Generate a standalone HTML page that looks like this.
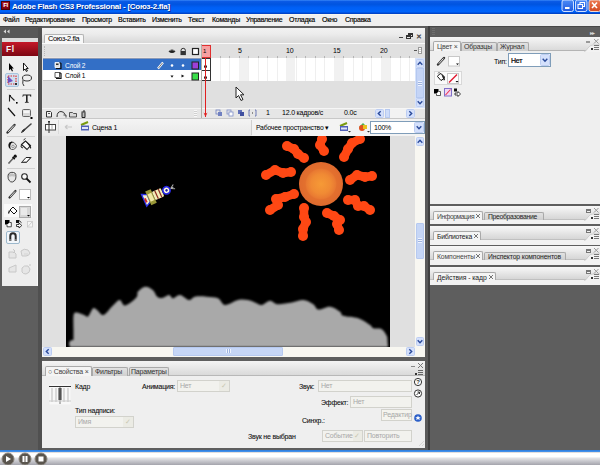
<!DOCTYPE html>
<html><head><meta charset="utf-8">
<style>
*{margin:0;padding:0;box-sizing:border-box}
html,body{width:600px;height:465px;overflow:hidden;background:#5e5e5e;font-family:"Liberation Sans",sans-serif;font-size:7px;color:#000;letter-spacing:-0.2px}
.a{position:absolute}
.t{position:absolute;white-space:nowrap;line-height:8px}
#title{left:0;top:0;width:600px;height:14px;background:linear-gradient(#3a88f8 0,#0a5ae6 10%,#0054e0 30%,#0060f6 55%,#0064fa 85%,#0048d2 93%,#0040c0 100%)}
#menu{left:0;top:14px;width:600px;height:12px;background:#efefef;border-top:1px solid #f8f6ee}
#menu span{position:absolute;top:1px;white-space:nowrap;line-height:8px;letter-spacing:-0.25px;-webkit-text-stroke:0.15px #000}
.panel{background:#ececec}
.tab{position:absolute;background:#f4f4f4;border:1px solid #a9a9a9;border-bottom:none;border-radius:2px 2px 0 0}
.tabg{position:absolute;background:linear-gradient(#e2e2e2,#cfcfcf);border:1px solid #a9a9a9;border-bottom:none;border-radius:2px 2px 0 0}
.hdr{position:absolute;background:linear-gradient(#f2f2f2,#d6d6d6)}
.gray{color:#a8a8a8}
.dd{position:absolute;background:#f2f2ee;border:1px solid #d2d2cc}
</style></head><body>
<!-- TITLE -->
<div id="title" class="a">
  <div class="a" style="left:1px;top:1px;width:9px;height:9px;background:linear-gradient(#b01828,#7a0010);border:1px solid #4a0008;color:#fff;font-size:6px;font-weight:bold;line-height:7px;text-align:center;letter-spacing:-0.3px">Fl</div>
  <div class="t" style="left:12px;top:3px;color:#fff;font-weight:bold;font-size:8px;letter-spacing:-0.25px;text-shadow:1px 1px 0 #0a3090">Adobe Flash CS3 Professional - [Союз-2.fla]</div>
  <svg class="a" style="left:561px;top:0" width="39" height="13" viewBox="561 0 39 13">
  <defs><linearGradient id="bb" x1="0" y1="0" x2="0" y2="1"><stop offset="0" stop-color="#4c8cf8"/><stop offset="1" stop-color="#2058dc"/></linearGradient>
  <linearGradient id="bc" x1="0" y1="0" x2="0" y2="1"><stop offset="0" stop-color="#ee7a52"/><stop offset="1" stop-color="#d24a22"/></linearGradient></defs>
  <rect x="562" y="0" width="11.5" height="11.5" rx="2" fill="url(#bb)" stroke="#d0e0ff" stroke-width="1"/>
  <rect x="565" y="7" width="4.5" height="2" fill="#fff"/>
  <rect x="575.5" y="0" width="11.5" height="11.5" rx="2" fill="url(#bb)" stroke="#d0e0ff" stroke-width="1"/>
  <rect x="580" y="2.5" width="4.5" height="4" fill="none" stroke="#fff" stroke-width="1"/><rect x="578" y="4.5" width="4.5" height="4" fill="#3a70e8" stroke="#fff" stroke-width="1"/>
  <rect x="589" y="0" width="11.5" height="11.5" rx="2" fill="url(#bc)" stroke="#f0d8d0" stroke-width="1"/>
  <path d="M592 2.5 L597 8 M597 2.5 L592 8" stroke="#fff" stroke-width="1.6"/>
</svg></div>
<!-- MENU -->
<div id="menu" class="a">
  <span style="left:3px">Файл</span>
  <span style="left:25px">Редактирование</span>
  <span style="left:82px">Просмотр</span>
  <span style="left:118px">Вставить</span>
  <span style="left:152px">Изменить</span>
  <span style="left:188px">Текст</span>
  <span style="left:212px">Команды</span>
  <span style="left:246px">Управление</span>
  <span style="left:289px">Отладка</span>
  <span style="left:322px">Окно</span>
  <span style="left:345px">Справка</span>
</div>

<!-- TOOLBAR -->
<div class="a" style="left:0;top:26px;width:38px;height:12px;background:#585858;border-top:1px solid #444"></div>
<svg class="a" style="left:3px;top:29px" width="7" height="5" viewBox="0 0 7 5"><path d="M3 0.5 L0.5 2.5 L3 4.5z M6.5 0.5 L4 2.5 L6.5 4.5z" fill="#d8d8d8"/></svg>
<div class="a panel" style="left:2px;top:38px;width:36px;height:248px;background:#eeeeee;border-right:1px solid #fafafa"></div>
<div class="a" style="left:38px;top:26px;width:4px;height:424px;background:#505050"></div>
<div class="a" style="left:2px;top:38px;width:36px;height:4px;background:#dcdcdc"></div>
<div class="a" style="left:2px;top:42px;width:36px;height:14px;background:linear-gradient(#c41828,#7c0612)"></div>
<div class="t" style="left:6px;top:45px;color:#f4f4f4;font-weight:bold;font-size:8.5px;letter-spacing:0.6px">Fl</div>

<!-- TOOL ICONS -->
<div class="a" style="left:5px;top:73px;width:14px;height:14px;background:#cfe0f0;border:1px solid #a8c4dc;border-radius:2px"></div>
<div class="a" style="left:7px;top:89px;width:28px;height:1px;background:#d0d0d0"></div>
<div class="a" style="left:7px;top:136px;width:28px;height:1px;background:#d0d0d0"></div>
<div class="a" style="left:7px;top:168px;width:28px;height:1px;background:#d0d0d0"></div>
<div class="a" style="left:4px;top:204px;width:28px;height:13px;background:#fafafa"></div>
<div class="a" style="left:6px;top:231px;width:14px;height:13px;background:#f2f6fa;border:1px solid #9cb8cc;border-radius:2px"></div>
<svg class="a" style="left:2px;top:58px" width="35" height="225" viewBox="2 58 35 225">
 <!-- arrows -->
 <path d="M9 63 L9 70.5 L10.6 69 L12 71.5 L13 71 L11.8 68.5 L13.8 68.5 Z" fill="#000"/>
 <path d="M23.5 63 L23.5 70.5 L25 69 L26.4 71.5 L27.4 71 L26.2 68.5 L28.2 68.5 Z" fill="#fff" stroke="#000" stroke-width=".9"/>
 <!-- free transform -->
 <rect x="8" y="76" width="8" height="8" fill="none" stroke="#e03030" stroke-width="1.2" stroke-dasharray="1.5 1"/>
 <path d="M8 76 L13 81 L8 83 Z" fill="#7050c0"/><rect x="15" y="83" width="2" height="2" fill="#333"/>
 <!-- lasso -->
 <ellipse cx="27" cy="78" rx="4.5" ry="3" fill="none" stroke="#333" stroke-width="1"/><path d="M23 80 q-1 4 1 6" stroke="#333" fill="none" stroke-width="1"/>
 <!-- pen -->
 <path d="M9.5 101.5 V95.5 L14.5 100.5" fill="none" stroke="#222" stroke-width="1.1"/><path d="M9.5 95.5 h1.5" stroke="#222" stroke-width="1"/><rect x="16" y="102" width="1.6" height="1.6" fill="#000"/>
 <!-- T -->
 <path d="M22.8 94.5 h8.4 v2.2 h-.7 l-.5 -1.2 h-2.4 v6.2 l1.1 .4 v.6 h-3.8 v-.6 l1.1 -.4 v-6.2 h-2.4 l-.5 1.2 h-.7z" fill="#222"/>
 <!-- line -->
 <path d="M8 108 L15 116" stroke="#111" stroke-width="1.2"/>
 <!-- rect -->
 <rect x="22.5" y="109.5" width="8" height="7" rx="1" fill="#d8d8d8" stroke="#666" stroke-width="1"/><rect x="23.5" y="110.5" width="6" height="2.5" fill="#f6f6f6"/><rect x="30.5" y="117" width="2" height="2" fill="#000"/>
 <!-- pencil -->
 <path d="M7.5 132.5 L14.5 125" stroke="#333" stroke-width="2.4" stroke-linecap="round"/><path d="M8.2 131.8 L14 125.5" stroke="#f0f0f0" stroke-width="1"/>
 <!-- brush -->
 <path d="M23 131 L31 124" stroke="#444" stroke-width="1.6" stroke-linecap="round"/><path d="M21.5 132.5 q1 -3 3.5 -3.5 q-.5 2.5 -3.5 3.5z" fill="#333" stroke="#333" stroke-width="1"/>
 <!-- ink bottle -->
 <path d="M9 143.5 q2 -2.5 5 -1 l2.5 3 q0 3 -3 4 h-2 q-2.5 -1 -2.5 -3z" fill="#e4e4e4" stroke="#555" stroke-width=".9"/>
 <path d="M9.5 142.5 q-1.5 2 -.5 5 l1.5 1.5 q-1 -3 .5 -5.5 l2 -1.5 q-2 -.5 -3.5 .5z" fill="#111"/>
 <circle cx="13" cy="146.5" r="1.3" fill="none" stroke="#888" stroke-width=".8"/>
 <!-- paint bucket -->
 <path d="M21.5 144.5 l4 -3.5 l5 4.5 l-3.5 4 z" fill="#fafafa" stroke="#222" stroke-width="1.1"/>
 <path d="M21.5 144.5 l-.5 2.5 l2 1" fill="none" stroke="#222" stroke-width="1"/>
 <path d="M25.5 141 l5 4.5 l.8 2.5 l-1 .8 l-1 -2.5z" fill="#222"/>
 <path d="M23.5 140 l2 -1.5" stroke="#333" stroke-width="1"/>
 <!-- eyedropper -->
 <path d="M8.5 163.5 L13 158.5" stroke="#333" stroke-width="1.2"/><path d="M8.5 163.5 L12.5 159" stroke="#ccc" stroke-width=".4"/>
 <path d="M12 157.5 l2.2 2.2 l1.2 -1.2 l-2.2 -2.2z" fill="#111"/><circle cx="15.2" cy="156.2" r="1.6" fill="#111"/>
 <!-- eraser -->
 <path d="M21.5 162.5 l4.5 -5 h5 l-4.5 5z" fill="#fff" stroke="#222" stroke-width="1"/><path d="M22 162 h4.5 l4.3 -4.5" fill="none" stroke="#666" stroke-width="1"/>
 <!-- hand -->
 <path d="M8 176 q0 -2.5 2 -3.2 q2 -.8 3.5 -.3 q2 .3 2.3 2 q.4 2.5 -.2 4.5 q-.8 2.3 -3.2 3 q-2 .2 -3 -1.2 q-1.6 -1.8 -1.4 -4.8z" fill="#e8e8e8" stroke="#333" stroke-width=".9"/>
 <path d="M10 174 v2.5 M12 173.5 v2.8 M14 174 v2.5" stroke="#666" stroke-width=".6"/>
 <!-- zoom -->
 <circle cx="24.5" cy="176.5" r="2.8" fill="#fafafa" stroke="#222" stroke-width="1.1"/><path d="M26.5 178.5 L30.5 182.5" stroke="#111" stroke-width="1.8"/>
 <!-- stroke pencil -->
 <path d="M9.5 197.5 L15.5 191" stroke="#333" stroke-width="2.2" stroke-linecap="round"/><path d="M10.2 196.8 L15 191.5" stroke="#f4f4f4" stroke-width=".9"/>
 <rect x="19.5" y="189.5" width="11" height="10" fill="#fff" stroke="#bbb" stroke-width="1"/><path d="M27 197 h3 l-1.5 1.5z" fill="#000"/>
 <!-- fill bucket -->
 <path d="M10 210 l3 -3 l4 4 l-3 3 z" fill="#fff" stroke="#111" stroke-width="1"/><path d="M9.5 210.5 l-1 3" stroke="#111" stroke-width="1.2"/>
 <rect x="19.5" y="206.5" width="11" height="11" fill="#d6d6d6" stroke="#aaa" stroke-width="1"/><rect x="21" y="208" width="6" height="7" fill="#eaeaea"/><path d="M27 215 h3 l-1.5 1.5z" fill="#000"/>
 <!-- small icons -->
 <rect x="5" y="220" width="4.5" height="4.5" fill="#000"/><path d="M9.5 222.5 h1.8 v4.3 h-4.3 v-2" fill="#fff" stroke="#222" stroke-width=".8"/>
 <rect x="16" y="220" width="3" height="3" fill="#111"/><path d="M16.5 224.5 h2.5 v-1.5 l2.8 2.5 l-2.8 2.5 v-1.5 h-2.5z" fill="#fff" stroke="#111" stroke-width=".8"/><path d="M19 220.5 l2.5 2.2" stroke="#111" stroke-width=".9"/>
 <rect x="27.5" y="221.5" width="5" height="5.5" fill="#f6f6f6" stroke="#c8c8c8" stroke-width=".8"/><path d="M28 226.5 l4 -4.5" stroke="#c0c0c0" stroke-width=".8"/>
 <!-- magnet -->
 <path d="M10.3 241 v-5 a2.7 2.7 0 0 1 5.4 0 v5" fill="none" stroke="#2a2a2a" stroke-width="2"/><path d="M9.3 240 h2 M14.7 240 h2" stroke="#bbb" stroke-width="1.2"/>
 <!-- disabled icons -->
 <g stroke="#c8c8c8" fill="#e6e6e6" stroke-width="1">
  <path d="M9 252 h5 l2 2 v4 h-7z"/><path d="M13 249 l2 2 l-2 2"/>
  <path d="M21 251 q3 -3 7 -1 l2 3 q-1 3 -4 3 h-4z"/><path d="M24 254 h4" stroke="#d4d4d4"/>
  <path d="M9 268 l7 -3 v7 h-7z"/>
  <path d="M22 268 q2 -3 6 -2 l2 3 q0 4 -4 5 q-3 0 -4 -2z"/><path d="M30 264 v2" />
 </g>
</svg>
<!-- DOC WINDOW -->
<div id="doc" class="a" style="left:42px;top:28px;width:383px;height:329px;background:#e4e4e4"></div>
<!-- tab strip -->
<div class="a" style="left:42px;top:28px;width:383px;height:15px;background:linear-gradient(#f2f2f2 0,#ececec 40%,#d8d8d8 100%)"></div>
<div class="tab" style="left:44px;top:34px;width:40px;height:9px;background:#f8f8f8;border-color:#b4b4b4"></div>
<div class="t" style="left:48px;top:35px;font-size:7.4px;letter-spacing:-0.35px">Союз-2.fla</div>
<div class="a" style="left:399px;top:37px;width:4px;height:1px;background:#444"></div>
<div class="a" style="left:408px;top:33px;width:5px;height:4px;border:1px solid #333;border-top-width:2px"></div>
<div class="a" style="left:406px;top:35px;width:5px;height:4px;border:1px solid #333;border-top-width:2px;background:#e6e6e6"></div>
<div class="t" style="left:416px;top:33px;font-size:7px;font-weight:bold;color:#444">✕</div>
<div class="a" style="left:42px;top:43px;width:383px;height:1px;background:#fafafa"></div>
<!-- timeline header -->
<div class="a" style="left:42px;top:44px;width:383px;height:14px;background:#e0e0e0"></div>
<div class="a" style="left:44px;top:46px;width:1px;height:10px;border-left:1px dotted #b8b8b8"></div>
<svg class="a" style="left:168px;top:47px" width="34" height="9" viewBox="0 0 34 9">
  <path d="M0.5 4.5 Q4 0.5 7.5 4.5 Q4 7.5 0.5 4.5z" fill="#222"/><path d="M1.5 3.8 Q4 1.5 6.5 3.8" stroke="#999" stroke-width=".8" fill="none"/>
  <path d="M13 4.5 v-1 a2.2 2.2 0 0 1 4.4 0 v1 z" fill="none" stroke="#333" stroke-width="1"/><rect x="12.5" y="4.3" width="5.4" height="3.8" fill="#333"/>
  <rect x="24.5" y="1.5" width="6" height="6" fill="#fff" stroke="#222" stroke-width="1.2"/>
</svg>
<!-- layer rows -->
<div class="a" style="left:43px;top:57px;width:158px;height:1px;background:#ebe6e2"></div><div class="a" style="left:43px;top:58px;width:158px;height:1px;background:#8a9ab8"></div><div class="a" style="left:43px;top:59px;width:158px;height:11px;background:#336fc6"></div>
<div class="a" style="left:43px;top:70px;width:158px;height:10px;background:#ffffff"></div>
<div class="a" style="left:43px;top:80px;width:158px;height:1px;background:#c4c4c4"></div>
<svg class="a" style="left:54px;top:61px" width="8" height="8" viewBox="0 0 8 8"><path d="M1 1.5h4.5v5H1z" fill="#ddd" stroke="#fff" stroke-width=".8"/><path d="M5.5 1.5l1.5 1v5h-5" fill="none" stroke="#111" stroke-width="1.2"/><rect x="2" y="2.5" width="2.5" height="1.5" fill="#333"/></svg>
<div class="t" style="left:65px;top:62px;color:#fff;font-size:6.6px">Слой 2</div>
<svg class="a" style="left:54px;top:71px" width="8" height="8" viewBox="0 0 8 8"><path d="M1 1.5h4.5v5H1z" fill="#fff" stroke="#333" stroke-width=".8"/><path d="M5.5 1.5l1.5 1v5h-5" fill="none" stroke="#111" stroke-width="1.2"/></svg>
<div class="t" style="left:65px;top:72px;font-size:6.6px">Слой 1</div>
<svg class="a" style="left:156px;top:60px" width="46" height="22" viewBox="0 0 46 22">
  <path d="M2 8.5 L7 2.5" stroke="#fff" stroke-width="2.2"/><path d="M2.5 8 L6.5 3" stroke="#555" stroke-width=".8"/>
  <circle cx="16" cy="5.5" r="1.3" fill="#fff"/><circle cx="27" cy="5.5" r="1.3" fill="#fff"/>
  <rect x="36" y="2" width="6.5" height="7" fill="#9b3fd8" stroke="#222" stroke-width="1"/>
  <path d="M14.5 15.5 L17.5 15.5 L16 17.8z" fill="#111"/><path d="M25.5 14.5 L28.3 16 L25.5 17.5z" fill="#111"/>
  <rect x="36" y="13" width="6.5" height="7" fill="#3adf4a" stroke="#222" stroke-width="1"/>
</svg>
<!-- frames -->
<div class="a" style="left:202px;top:58px;width:213px;height:23px;background:#fff;
 background-image:repeating-linear-gradient(90deg,transparent 0,transparent 8.47px,#efefef 8.47px,#efefef 9.47px)"></div>
<div class="a" style="left:239px;top:58px;width:9px;height:23px;background:#f1f1f1"></div>
<div class="a" style="left:286px;top:58px;width:9px;height:23px;background:#f1f1f1"></div>
<div class="a" style="left:334px;top:58px;width:9px;height:23px;background:#f1f1f1"></div>
<div class="a" style="left:381px;top:58px;width:9px;height:23px;background:#f1f1f1"></div>
<div class="a" style="left:202px;top:56px;width:213px;height:2px;
 background-image:repeating-linear-gradient(90deg,transparent 0,transparent 8.47px,#b4b4b4 8.47px,#b4b4b4 9.47px)"></div>
<div class="a" style="left:201px;top:58px;width:10px;height:23px;border:1px solid #333;background:transparent"></div>
<div class="a" style="left:201px;top:70px;width:10px;height:1px;background:#333"></div>
<div class="a" style="left:204px;top:65px;width:3px;height:3px;border-radius:50%;background:#111"></div>
<div class="a" style="left:204px;top:76px;width:3px;height:3px;border-radius:50%;background:#111"></div>
<div class="t" style="left:238px;top:47px;">5</div>
<div class="t" style="left:286px;top:47px;">10</div>
<div class="t" style="left:333px;top:47px;">15</div>
<div class="t" style="left:380px;top:47px;">20</div>
<div class="a" style="left:414px;top:50px;width:3px;height:1px;background:#555"></div><div class="a" style="left:418px;top:47px;width:4px;height:7px;border:1px solid #999;background:repeating-linear-gradient(#fff 0 1px,#ccc 1px 2px)"></div>
<div class="a" style="left:201px;top:45px;width:10px;height:13px;background:#f7a0a0;border:1px solid #e03030"></div>
<div class="t" style="left:203px;top:47px;font-size:6px">1</div>
<!-- empty grey -->
<div class="a" style="left:202px;top:81px;width:213px;height:27px;background:#e0e0e0"></div>
<div class="a" style="left:43px;top:81px;width:158px;height:27px;background:#e0e0e0"></div>
<!-- v scroll timeline -->
<div class="a" style="left:415px;top:58px;width:10px;height:50px;background:#d6e2fa"></div><div class="a" style="left:416px;top:68px;width:8px;height:30px;background:#c4d4f6;border:1px solid #b4c8f0"></div><div class="a" style="left:418px;top:81px;width:4px;height:5px;background:repeating-linear-gradient(#eef3fe 0 1px,#9fb4e0 1px 2px)"></div>
<svg class="a" style="left:416px;top:59px" width="8" height="9" viewBox="0 0 8 9"><rect x=".5" y=".5" width="7" height="8" rx="1" fill="#d4e0fb" stroke="#bccdf2"/><path d="M1.7000000000000002 5.7 L4.0 3.3 L6.3 5.7" fill="none" stroke="#2a4a9a" stroke-width="1.4"/></svg>
<svg class="a" style="left:416px;top:98px" width="8" height="9" viewBox="0 0 8 9"><rect x=".5" y=".5" width="7" height="8" rx="1" fill="#d4e0fb" stroke="#bccdf2"/><path d="M1.7000000000000002 3.3 L4.0 5.7 L6.3 3.3" fill="none" stroke="#2a4a9a" stroke-width="1.4"/></svg>


<!-- bottom bar -->
<div class="a" style="left:42px;top:108px;width:383px;height:10px;background:#e6e6e6;border-top:1px solid #f6f6f6"></div>
<svg class="a" style="left:45px;top:110px" width="45" height="8" viewBox="0 0 45 8">
 <path d="M1.5 1.5 h4 l1 1 v4.5 h-5z" fill="#f4f4f4" stroke="#333" stroke-width="1"/><path d="M3 3.5 h2" stroke="#333" stroke-width=".8"/>
 <path d="M12 7 q0 -5.5 4 -5.5 q3 0 4 3" fill="none" stroke="#333" stroke-width="1"/><path d="M18.5 5 h2.5 v2.5" fill="none" stroke="#333" stroke-width=".9"/>
 <path d="M24.5 2.5 h3 l1 1 h3 v3.5 h-7z" fill="#d8d8d8" stroke="#444" stroke-width=".9"/>
 <path d="M36.5 2 h4 M37 2.5 v5 h3 v-5" fill="#bbb" stroke="#222" stroke-width="1"/><path d="M38 1 h2" stroke="#222" stroke-width="1"/>
</svg>
<div class="a" style="left:194px;top:110px;width:3px;height:7px;background:repeating-linear-gradient(#f8f8f8 0 1px,#d0d0d0 1px 2px)"></div>
<div class="a" style="left:201px;top:44px;width:1px;height:74px;background:#b0b0a8"></div><div class="a" style="left:205px;top:58px;width:1px;height:59px;background:#e02020"></div><svg class="a" style="left:202px;top:111px" width="7" height="7" viewBox="0 0 7 7"><path d="M1.5 1.5 L3.5 6 L5.5 1.5 L3.5 3z" fill="#e02020"/></svg>
<svg class="a" style="left:215px;top:109px" width="45" height="9" viewBox="0 0 45 9">
 <rect x="1" y="1" width="4" height="4" fill="none" stroke="#7080c0" stroke-width=".8"/><rect x="3" y="3" width="4" height="4" fill="#7080c0"/>
 <rect x="12" y="1" width="4" height="4" fill="none" stroke="#8090c8" stroke-width=".8"/><rect x="14" y="3" width="4" height="4" fill="#fff" stroke="#8090c8" stroke-width=".8"/>
 <rect x="23" y="1" width="4" height="4" fill="#6070b8"/><rect x="25" y="3" width="4" height="4" fill="#4050a0"/>
 <path d="M35 1h-1v6h1 M40 1h1v6h-1" fill="none" stroke="#5060a8" stroke-width=".8"/><rect x="37" y="3.5" width="1" height="1" fill="#333"/>
</svg>
<div class="t" style="left:266px;top:109px;">1</div>
<div class="t" style="left:282px;top:109px;">12.0 кадров/с</div>
<div class="t" style="left:344px;top:109px;">0.0c</div>
<div class="a" style="left:375px;top:109px;width:40px;height:9px;background:#f2f2f2"></div>
<svg class="a" style="left:375px;top:109px" width="9" height="9" viewBox="0 0 9 9"><rect x=".5" y=".5" width="8" height="8" rx="1" fill="#d4e0fb" stroke="#bccdf2"/><path d="M5.7 2.2 L3.3 4.5 L5.7 6.8" fill="none" stroke="#2a4a9a" stroke-width="1.4"/></svg>
<div class="a" style="left:385px;top:109px;width:5px;height:9px;background:#cddcfa;border:1px solid #b6c9f0"></div>
<svg class="a" style="left:406px;top:109px" width="9" height="9" viewBox="0 0 9 9"><rect x=".5" y=".5" width="8" height="8" rx="1" fill="#d4e0fb" stroke="#bccdf2"/><path d="M3.3 2.2 L5.7 4.5 L3.3 6.8" fill="none" stroke="#2a4a9a" stroke-width="1.4"/></svg>


<!-- edit bar -->
<div class="a" style="left:42px;top:118px;width:383px;height:18px;background:linear-gradient(#f4f4f4,#e8e8e8);border-top:1px solid #c8c8c8"></div>
<svg class="a" style="left:44px;top:120px" width="14" height="14" viewBox="0 0 14 14">
 <rect x="1.5" y="4.5" width="10" height="5.5" fill="#fff" stroke="#444" stroke-width="1"/><path d="M5 1 v12" stroke="#333" stroke-width="1"/><rect x="4" y="1" width="2" height="1.5" fill="#333"/>
 <path d="M8 5 v4.5" stroke="#999" stroke-width=".8"/>
</svg><div class="a" style="left:58px;top:120px;width:1px;height:14px;background:#dadada"></div>

<svg class="a" style="left:64px;top:124px" width="9" height="6" viewBox="0 0 9 6"><path d="M1 3 h7 M1 3 l2.5 -2 M1 3 l2.5 2" stroke="#c8c8c8" stroke-width="1.1" fill="none"/></svg>
<svg class="a" style="left:80px;top:121px" width="10" height="10" viewBox="0 0 10 10">
 <path d="M1 4 L8 1" stroke="#7a9a10" stroke-width="2"/><rect x="1" y="4.5" width="8" height="5" fill="#5060b8"/><rect x="2" y="6" width="6" height="2" fill="#e0e4f8"/>
</svg>
<div class="t" style="left:92px;top:124px;">Сцена 1</div>
<div class="a" style="left:251px;top:120px;width:1px;height:15px;background:#d0d0d0"></div><div class="a" style="left:252px;top:119px;width:173px;height:17px;background:#f3f3f3"></div>
<div class="t" style="left:256px;top:124px;font-size:6.8px">Рабочее пространство ▾</div>
<svg class="a" style="left:338px;top:121px" width="34" height="12" viewBox="0 0 34 12">
 <path d="M2 5 L9 2" stroke="#7a9a10" stroke-width="2"/><rect x="2" y="5" width="8" height="5" fill="#5060b8"/><rect x="3" y="6.5" width="6" height="2" fill="#e0e4f8"/><path d="M10 10h3l-1.5 1.5z" fill="#333"/>
 <path d="M21 6 l4 -4 l3 3z" fill="#50b050"/><circle cx="24" cy="7" r="3" fill="#e05020"/><rect x="25" y="4" width="4" height="4" fill="#e8c020"/><path d="M29 10h3l-1.5 1.5z" fill="#333"/>
</svg>
<div class="a" style="left:370px;top:121px;width:55px;height:13px;background:#fff;border:1px solid #7f9db9"></div>
<div class="t" style="left:374px;top:124px;">100%</div>
<svg class="a" style="left:414px;top:122px" width="10" height="11" viewBox="0 0 10 11"><rect x=".5" y=".5" width="9" height="10" rx="1" fill="#d4e0fb" stroke="#bccdf2"/><path d="M2.7 4.3 L5.0 6.7 L7.3 4.3" fill="none" stroke="#2a4a9a" stroke-width="1.4"/></svg>

<!-- stage area -->
<div class="a" style="left:43px;top:136px;width:372px;height:211px;background:#e0e0e0"></div>
<div class="a" style="left:66px;top:136px;width:324px;height:211px;background:#000"></div>
<!-- v scroll stage -->
<div class="a" style="left:415px;top:136px;width:10px;height:211px;background:#f8f7f1"></div>
<svg class="a" style="left:416px;top:137px" width="8" height="9" viewBox="0 0 8 9"><rect x=".5" y=".5" width="7" height="8" rx="1" fill="#d4e0fb" stroke="#bccdf2"/><path d="M1.7000000000000002 5.7 L4.0 3.3 L6.3 5.7" fill="none" stroke="#2a4a9a" stroke-width="1.4"/></svg>
<div class="a" style="left:416px;top:223px;width:8px;height:36px;background:#c6d6f6;border:1px solid #b6c9f0;border-radius:1px"></div><div class="a" style="left:418px;top:238px;width:4px;height:5px;background:repeating-linear-gradient(#eef3fe 0 1px,#9fb4e0 1px 2px)"></div>
<svg class="a" style="left:416px;top:337px" width="8" height="9" viewBox="0 0 8 9"><rect x=".5" y=".5" width="7" height="8" rx="1" fill="#d4e0fb" stroke="#bccdf2"/><path d="M1.7000000000000002 3.3 L4.0 5.7 L6.3 3.3" fill="none" stroke="#2a4a9a" stroke-width="1.4"/></svg>
<!-- h scroll stage -->
<div class="a" style="left:42px;top:347px;width:383px;height:10px;background:#f8f7f1"></div>
<svg class="a" style="left:43px;top:347px" width="9" height="9" viewBox="0 0 9 9"><rect x=".5" y=".5" width="8" height="8" rx="1" fill="#d4e0fb" stroke="#bccdf2"/><path d="M5.7 2.2 L3.3 4.5 L5.7 6.8" fill="none" stroke="#2a4a9a" stroke-width="1.4"/></svg>
<div class="a" style="left:173px;top:347px;width:110px;height:9px;background:#c6d6f6;border:1px solid #b6c9f0;border-radius:1px"></div><div class="a" style="left:226px;top:349px;width:5px;height:4px;background:repeating-linear-gradient(90deg,#eef3fe 0 1px,#9fb4e0 1px 2px)"></div>
<svg class="a" style="left:406px;top:347px" width="9" height="9" viewBox="0 0 9 9"><rect x=".5" y=".5" width="8" height="8" rx="1" fill="#d4e0fb" stroke="#bccdf2"/><path d="M3.3 2.2 L5.7 4.5 L3.3 6.8" fill="none" stroke="#2a4a9a" stroke-width="1.4"/></svg>
<!-- STAGE ART -->
<svg class="a" style="left:66px;top:136px" width="324" height="211" viewBox="66 136 324 211">
 <defs>
  <radialGradient id="sg" cx="0.5" cy="0.5" r="0.5">
   <stop offset="0" stop-color="#f69a36"/><stop offset="0.45" stop-color="#f08a34"/><stop offset="0.66" stop-color="#e97a32"/><stop offset="0.72" stop-color="#e3702e"/><stop offset="1" stop-color="#df6a2e"/>
  </radialGradient>
  <filter id="bl" x="-5%" y="-5%" width="110%" height="110%"><feGaussianBlur stdDeviation="0.9"/></filter>
 </defs>
 <g fill="none" stroke="#ff4814" stroke-width="8.6" stroke-linecap="round" stroke-linejoin="round">
  <path d="M287 146 L294 149 L298 154 L304 158"/>
  <path d="M266 175 L275 170 L283 173 L291 172"/>
  <path d="M322 139 L320 145 L324 151"/>
  <path d="M360 139 L352 143 L348 149 L344 157"/>
  <path d="M350 180 L357 175 L365 177 L372 176"/>
  <path d="M348 200 L355 200 L358 206 L364 206 L370 210"/>
  <path d="M327 213 L334 216 L340 220 L337 224 L339 230"/>
  <path d="M304 208 L304 217 L306 222 L303 229 L303 236"/>
  <path d="M294 194 L285 197 L276 199 L278 205 L270 210"/>
 </g>
 <g fill="#ff4814">
<circle cx="287" cy="146" r="5"/><circle cx="294" cy="149" r="5"/><circle cx="298" cy="154" r="5"/><circle cx="304" cy="158" r="5"/>
<circle cx="266" cy="175" r="5"/><circle cx="275" cy="170" r="5"/><circle cx="283" cy="173" r="5"/><circle cx="291" cy="172" r="5"/>
<circle cx="322" cy="139" r="5"/><circle cx="320" cy="145" r="5"/><circle cx="324" cy="151" r="5"/>
<circle cx="360" cy="139" r="5"/><circle cx="352" cy="143" r="5"/><circle cx="348" cy="149" r="5"/><circle cx="344" cy="157" r="5"/>
<circle cx="350" cy="180" r="5"/><circle cx="357" cy="175" r="5"/><circle cx="365" cy="177" r="5"/><circle cx="372" cy="176" r="5"/>
<circle cx="348" cy="200" r="5"/><circle cx="355" cy="200" r="5"/><circle cx="358" cy="206" r="5"/><circle cx="364" cy="206" r="5"/><circle cx="370" cy="210" r="5"/>
<circle cx="327" cy="213" r="5"/><circle cx="334" cy="216" r="5"/><circle cx="340" cy="220" r="5"/><circle cx="337" cy="224" r="5"/><circle cx="339" cy="230" r="5"/>
<circle cx="304" cy="208" r="5"/><circle cx="304" cy="217" r="5"/><circle cx="306" cy="222" r="5"/><circle cx="303" cy="229" r="5"/><circle cx="303" cy="236" r="5"/>
<circle cx="294" cy="194" r="5"/><circle cx="285" cy="197" r="5"/><circle cx="276" cy="199" r="5"/><circle cx="278" cy="205" r="5"/><circle cx="270" cy="210" r="5"/>
 </g>
 <circle cx="321" cy="184" r="22" fill="url(#sg)"/>
 <path fill="#a9a9a9" filter="url(#bl)" d="M73.5 340 C73.5 338.3 73.5 334.0 73.5 330 C73.5 326.0 73.1 318.9 73.5 316 C73.9 313.1 74.2 312.7 76 312.5 C77.8 312.3 82.0 314.3 84 315 C86.0 315.7 86.5 317.6 88 316.5 C89.5 315.4 91.5 309.6 93 308.5 C94.5 307.4 95.2 308.9 97 310 C98.8 311.1 101.0 315.6 103.5 315 C106.0 314.4 109.3 309.0 112 306.5 C114.7 304.0 117.4 300.2 119.5 300 C121.6 299.8 122.4 305.2 124.5 305.5 C126.6 305.8 129.9 303.0 132 301.5 C134.1 300.0 136.0 298.2 137 296.5 C138.0 294.8 136.6 293.1 138 291.5 C139.4 289.9 142.8 286.9 145.3 286.7 C147.8 286.4 150.9 288.4 152.8 290 C154.8 291.6 155.5 295.2 157 296.5 C158.5 297.8 160.0 298.2 162 298 C164.0 297.8 167.2 294.9 169 295 C170.8 295.1 171.2 298.3 173 298.3 C174.8 298.3 177.3 294.7 180 295 C182.7 295.3 186.5 299.7 189 300 C191.5 300.3 192.1 297.2 195 296.7 C197.9 296.1 202.9 296.4 206.7 296.7 C210.5 297.0 214.9 296.9 218 298.3 C221.1 299.7 221.7 304.7 225 305 C228.3 305.3 234.2 300.8 238 300 C241.8 299.2 245.2 299.6 248 300 C250.8 300.4 252.7 301.7 255 302.5 C257.3 303.3 259.2 305.3 261.7 305 C264.2 304.7 267.4 300.9 270 300.8 C272.6 300.7 273.9 303.9 277.5 304.2 C281.1 304.5 287.4 303.2 291.7 302.5 C296.0 301.8 299.7 299.7 303.3 300 C306.9 300.3 310.8 302.6 313.3 304.2 C315.8 305.8 315.5 309.1 318.3 309.5 C321.1 309.9 326.4 306.3 330 306.7 C333.6 307.1 337.8 310.2 340 311.7 C342.2 313.2 340.2 314.7 343.3 315.8 C346.4 316.9 353.9 316.8 358.3 318.3 C362.8 319.8 367.5 323.3 370 325 C372.5 326.7 371.4 327.6 373.3 328.3 C375.2 329.0 379.5 327.9 381.7 329.2 C383.9 330.4 385.7 333.8 386.7 335.8 C387.7 337.8 387.4 340.1 387.5 341 L388 347 L70 347 L69 344 Q69 340 73.5 340 Z"/>
 <g transform="translate(156 195) rotate(-24)">
  <path d="M-13 -6.5 L-8 -4 L-8 4 L-13 6.5 Z" fill="#f6f2d0" stroke="#2a30e8" stroke-width="1.3"/>
  <rect x="-12.5" y="-1.5" width="2" height="4.5" fill="#d02828"/>
  <rect x="-8.5" y="-7.5" width="6" height="15" fill="#9a9838"/>
  <rect x="-7.5" y="-4" width="4" height="8" fill="#f0e8a8"/>
  <rect x="-2.5" y="-4.5" width="9.5" height="9" rx="1" fill="#f4ecb8"/>
  <rect x="0" y="-4.5" width="1.2" height="9" fill="#8a2a20"/><rect x="3.8" y="-4.5" width="1.2" height="9" fill="#8a2a20"/>
  <circle cx="11.5" cy="0" r="3.6" fill="#fffbe0" stroke="#2828e8" stroke-width="1.7"/>
  <circle cx="11.5" cy="0" r="1.3" fill="#2020a0"/>
  <path d="M16 0 L20 -2.5 M16 0 L20 2 M16 0 h3" stroke="#b0b0b0" stroke-width="1"/>
 </g>
</svg>
<!-- cursor -->
<svg class="a" style="left:235px;top:86px" width="11" height="16" viewBox="0 0 11 16">
 <path d="M1 1 L1 12 L3.5 9.5 L6 14.5 L8 13.5 L5.5 8.8 L9 8.8 Z" fill="#fff" stroke="#222" stroke-width="1"/>
</svg>
<!-- PROPERTIES -->
<div id="props" class="a" style="left:42px;top:361px;width:384px;height:87px;background:#efefef"></div>
<div class="a" style="left:42px;top:361px;width:384px;height:15px;background:linear-gradient(#f4f4f4,#d8d8d8)"></div>
<div class="a" style="left:42px;top:375px;width:384px;height:1px;background:#b8b8b8"></div>
<div class="tabg" style="left:92px;top:367px;width:36px;height:9px"></div>
<div class="tabg" style="left:129px;top:367px;width:40px;height:9px"></div>
<div class="tab" style="left:45px;top:366px;width:47px;height:10px;background:#f4f4f4"></div>
<div class="t" style="left:48px;top:368px;color:#444">○ Свойства ×</div>
<div class="t" style="left:95px;top:368px;color:#333">Фильтры</div>
<div class="t" style="left:131px;top:368px;color:#333">Параметры</div>
<div class="a" style="left:411px;top:366px;width:4px;height:1px;background:#888"></div>
<svg class="a" style="left:417px;top:362px" width="7" height="7" viewBox="0 0 7 7"><path d="M1 1 L6 6 M6 1 L1 6" stroke="#777" stroke-width="1"/></svg>
<div class="a" style="left:415px;top:373px;width:2px;height:2px;background:#333"></div><div class="a" style="left:418px;top:370px;width:5px;height:5px;background:repeating-linear-gradient(#666 0 1px,transparent 1px 2px)"></div>
<svg class="a" style="left:49px;top:384px" width="22" height="21" viewBox="0 0 22 21">
 <rect x="0.5" y="0.5" width="21" height="20" fill="#f8f8f8"/>
 <path d="M0 2.5h22" stroke="#333" stroke-width="1"/>
 <path d="M3 4v14 M7 4v14 M15 4v14 M19 4v14" stroke="#bbb" stroke-width="1"/>
 <rect x="9.5" y="4" width="3" height="12" fill="#333"/><path d="M11 3v17" stroke="#777" stroke-width="1"/>
 <path d="M0 17h22" stroke="#ccc" stroke-width="1"/>
</svg>
<div class="t" style="left:75px;top:383px;">Кадр</div>
<div class="t" style="left:75px;top:407px;color:#111;font-size:7px;letter-spacing:-0.2px;-webkit-text-stroke:0.1px #111">Тип надписи:</div>
<div class="dd" style="left:75px;top:416px;width:59px;height:12px"></div>
<div class="t gray" style="left:78px;top:418px;">Имя</div>
<div class="a" style="left:123px;top:417px;width:10px;height:10px;background:#ebebe4"></div>
<div class="t" style="left:125px;top:418px;color:#c8c8b0;font-size:7px">✓</div>
<div class="t" style="left:142px;top:383px;color:#111;font-size:7px;letter-spacing:-0.2px;-webkit-text-stroke:0.1px #111">Анимация:</div>
<div class="dd" style="left:177px;top:380px;width:53px;height:12px"></div>
<div class="t gray" style="left:180px;top:382px;">Нет</div>
<div class="a" style="left:219px;top:381px;width:10px;height:10px;background:#ebebe4"></div>
<div class="t" style="left:221px;top:382px;color:#c8c8b0;font-size:7px">✓</div>
<div class="t" style="left:299px;top:383px;color:#111;font-size:7px;letter-spacing:-0.2px;-webkit-text-stroke:0.1px #111">Звук:</div>
<div class="dd" style="left:318px;top:380px;width:94px;height:12px"></div>
<div class="t gray" style="left:321px;top:382px;">Нет</div>
<div class="t" style="left:321px;top:399px;color:#111;font-size:7px;letter-spacing:-0.2px;-webkit-text-stroke:0.1px #111">Эффект:</div>
<div class="dd" style="left:350px;top:396px;width:62px;height:12px"></div>
<div class="t gray" style="left:353px;top:398px;">Нет</div>
<div class="dd" style="left:381px;top:409px;width:31px;height:12px;background:#f4f4ee"></div>
<div class="t gray" style="left:383px;top:411px;">Редактир</div>
<div class="t" style="left:302px;top:417px;color:#111;font-size:7px;letter-spacing:-0.2px;-webkit-text-stroke:0.1px #111">Синхр.:</div>
<div class="t" style="left:248px;top:433px;color:#111;font-size:7px;letter-spacing:-0.2px;-webkit-text-stroke:0.1px #111">Звук не выбран</div>
<div class="dd" style="left:322px;top:430px;width:41px;height:12px"></div>
<div class="t gray" style="left:325px;top:432px;">Событие</div>
<div class="a" style="left:353px;top:431px;width:9px;height:10px;background:#ebebe4"></div>
<div class="t" style="left:354px;top:432px;color:#c8c8b0;font-size:7px">✓</div>
<div class="dd" style="left:364px;top:430px;width:48px;height:12px"></div>
<div class="t gray" style="left:367px;top:432px;">Повторить</div>
<svg class="a" style="left:413px;top:377px" width="11" height="70" viewBox="0 0 11 70">
 <circle cx="5" cy="5" r="3.6" fill="#fff" stroke="#333" stroke-width="1"/><text x="3.3" y="7.3" font-size="6" font-family="Liberation Sans" font-weight="bold" fill="#333">?</text>
 <circle cx="5" cy="16.5" r="3.6" fill="#fff" stroke="#333" stroke-width="1"/><path d="M3.5 18 l3 -3 M4.5 15 h2 v2" stroke="#333" stroke-width="1" fill="none"/>
 <circle cx="5" cy="41" r="3.8" fill="#2a5ec8"/><path d="M5 38.5 l.8 1.8 h1.8 l-1.4 1.1 .6 1.8 -1.8 -1.1 -1.8 1.1 .6 -1.8 -1.4 -1.1 h1.8z" fill="#fff"/>
 <path d="M9 69 l2 -2 M6 69 l5 -5" stroke="#d0d0d0" stroke-width=".8"/>
</svg>
<!-- RIGHT PANEL -->
<div class="a" style="left:425px;top:26px;width:5px;height:424px;background:#5a5a5a;border-right:2px solid #404040"></div><div class="a" style="left:430px;top:26px;width:170px;height:1px;background:#484848"></div>
<div class="a" style="left:432px;top:28px;width:3px;height:8px;background:repeating-linear-gradient(#6e6e6e 0 1px,transparent 1px 2px)"></div>
<div class="t" style="left:590px;top:29px;color:#d8d8d8;font-size:6px;letter-spacing:-1px">▸▸</div>
<div class="a" style="left:430px;top:37px;width:170px;height:167px;background:#efefef"></div>
<div class="a" style="left:430px;top:37px;width:170px;height:14px;background:linear-gradient(#f6f6f6,#d8d8d8)"></div>
<div class="a" style="left:430px;top:50px;width:170px;height:1px;background:#b4b4b4"></div>
<svg class="a" style="left:580px;top:44px" width="20" height="8" viewBox="0 0 20 8"><path d="M4 7.5 Q6 7.5 8 4 Q10 1 13 1 H20 V8 H4z" fill="#f2f2f2"/><path d="M4 7.5 Q6 7.5 8 4 Q10 1 13 1 H20" fill="none" stroke="#c8c8c8" stroke-width=".8"/></svg><div class="a" style="left:586px;top:41px;width:4px;height:2px;background:#999"></div><svg class="a" style="left:593px;top:38px" width="7" height="7" viewBox="0 0 7 7"><path d="M1 1 L5.5 5.5 M5.5 1 L1 5.5" stroke="#999" stroke-width="1"/></svg><div class="a" style="left:591px;top:48px;width:2px;height:2px;background:#333"></div><div class="a" style="left:594px;top:45px;width:5px;height:5px;background:repeating-linear-gradient(#777 0 1px,transparent 1px 2px)"></div>
<div class="tabg" style="left:461px;top:42px;width:36px;height:9px"></div>
<div class="tabg" style="left:497px;top:42px;width:32px;height:9px"></div>
<div class="tab" style="left:433px;top:41px;width:28px;height:10px;background:#f4f4f4"></div>
<div class="t" style="left:437px;top:43px;color:#444">Цвет ×</div>
<div class="t" style="left:464px;top:43px;color:#333">Образцы</div>
<div class="t" style="left:500px;top:43px;color:#333">Журнал</div>
<svg class="a" style="left:432px;top:54px" width="32" height="45" viewBox="432 54 32 45">
 <path d="M438 64.5 L444 58" stroke="#333" stroke-width="2.4" stroke-linecap="round"/><path d="M438.8 63.7 L443.5 58.5" stroke="#f2f2f2" stroke-width="1"/>
 <rect x="448.5" y="56.5" width="11" height="9.5" fill="#fff" stroke="#c8c8c8" stroke-width="1"/><path d="M456 63.5 h3 l-1.5 1.5z" fill="#000"/>
 <rect x="434.5" y="71.5" width="27" height="13" fill="#fafafa" stroke="#d8d8d8" stroke-width="1"/>
 <path d="M437.5 76.5 q1 -2.5 3.5 -3 l3.5 3.5 q-1 2.5 -3.5 3.5z" fill="#fff" stroke="#111" stroke-width="1"/>
 <path d="M441 73.5 l3.5 3.5 l.5 3 l-1.2 .5z" fill="#222"/><path d="M438 73.5 l1.5 -1.5" stroke="#333" stroke-width=".9"/>
 <rect x="447.5" y="73.5" width="11" height="10" fill="#fff" stroke="#c8c8c8" stroke-width="1"/><path d="M449 82.5 L457 74.5" stroke="#e01830" stroke-width="1.4"/><path d="M455.5 81 h3 l-1.5 1.5z" fill="#000"/>
 <rect x="434" y="89" width="4.5" height="4.5" fill="#000"/><path d="M438.5 91.5 h2 v4 h-4 v-2" fill="#fff" stroke="#333" stroke-width=".8"/>
 <rect x="444.5" y="88.5" width="7" height="7.5" fill="#eed8f4" stroke="#8070c8" stroke-width="1"/><path d="M445.5 95 L450.5 89.5" stroke="#f03050" stroke-width="1.1"/>
 <rect x="454" y="88.5" width="3" height="3" fill="#111"/><path d="M455 93 h3 v-1.5 l2.5 2.5 l-2.5 2.5 v-1.5 h-3z" fill="#fff" stroke="#111" stroke-width=".8"/>
</svg>
<div class="t" style="left:494px;top:58px;">Тип:</div>
<div class="a" style="left:508px;top:53px;width:43px;height:14px;background:#fff;border:1px solid #7f9db9"></div>
<div class="t" style="left:511px;top:57px;font-size:7px;-webkit-text-stroke:0.2px #000">Нет</div>
<svg class="a" style="left:540px;top:54px" width="10" height="12" viewBox="0 0 10 12"><rect x=".5" y=".5" width="9" height="11" rx="1" fill="#d4e0fb" stroke="#bccdf2"/><path d="M2.7 4.8 L5.0 7.2 L7.3 4.8" fill="none" stroke="#2a4a9a" stroke-width="1.4"/></svg>

<!-- collapsed panels -->
<div class="a" style="left:430px;top:206px;width:170px;height:18px;background:#f2f2f2"></div>
<div class="a" style="left:430px;top:206px;width:170px;height:14px;background:linear-gradient(#f8f8f8,#d6d6d6);border-bottom:1px solid #c0c0c0"></div>
<div class="tab" style="left:433px;top:211px;width:50px;height:9px;background:#f4f4f4"></div>
<div class="t" style="left:437px;top:213px;color:#444;font-size:6.8px;letter-spacing:-0.45px">Информация</div>
<svg class="a" style="left:475px;top:213px" width="6" height="6" viewBox="0 0 6 6"><path d="M1 1 L5 5 M5 1 L1 5" stroke="#666" stroke-width=".9"/></svg>
<div class="tabg" style="left:484px;top:212px;width:60px;height:8px"></div>
<div class="t" style="left:488px;top:213px;color:#222;font-size:6.8px;letter-spacing:-0.3px">Преобразование</div>
<svg class="a" style="left:580px;top:213px" width="20" height="8" viewBox="0 0 20 8"><path d="M4 7.5 Q6 7.5 8 4 Q10 1 13 1 H20 V8 H4z" fill="#f2f2f2"/><path d="M4 7.5 Q6 7.5 8 4 Q10 1 13 1 H20" fill="none" stroke="#c8c8c8" stroke-width=".8"/></svg><div class="a" style="left:586px;top:209px;width:5px;height:4px;border:1px solid #777;border-top-width:2px;background:#f0f0f0"></div><svg class="a" style="left:593px;top:207px" width="7" height="7" viewBox="0 0 7 7"><path d="M1 1 L5.5 5.5 M5.5 1 L1 5.5" stroke="#999" stroke-width="1"/></svg><div class="a" style="left:591px;top:217px;width:2px;height:2px;background:#333"></div><div class="a" style="left:594px;top:214px;width:5px;height:5px;background:repeating-linear-gradient(#777 0 1px,transparent 1px 2px)"></div>
<div class="a" style="left:430px;top:226px;width:170px;height:19px;background:#f2f2f2"></div>
<div class="a" style="left:430px;top:226px;width:170px;height:14px;background:linear-gradient(#f8f8f8,#d6d6d6);border-bottom:1px solid #c0c0c0"></div>
<div class="tab" style="left:433px;top:231px;width:48px;height:9px;background:#f4f4f4"></div>
<div class="t" style="left:437px;top:233px;color:#222;font-size:6.8px;letter-spacing:-0.2px">Библиотека</div>
<svg class="a" style="left:473px;top:233px" width="6" height="6" viewBox="0 0 6 6"><path d="M1 1 L5 5 M5 1 L1 5" stroke="#666" stroke-width=".9"/></svg>
<svg class="a" style="left:580px;top:233px" width="20" height="8" viewBox="0 0 20 8"><path d="M4 7.5 Q6 7.5 8 4 Q10 1 13 1 H20 V8 H4z" fill="#f2f2f2"/><path d="M4 7.5 Q6 7.5 8 4 Q10 1 13 1 H20" fill="none" stroke="#c8c8c8" stroke-width=".8"/></svg><div class="a" style="left:586px;top:229px;width:5px;height:4px;border:1px solid #777;border-top-width:2px;background:#f0f0f0"></div><svg class="a" style="left:593px;top:227px" width="7" height="7" viewBox="0 0 7 7"><path d="M1 1 L5.5 5.5 M5.5 1 L1 5.5" stroke="#999" stroke-width="1"/></svg><div class="a" style="left:591px;top:237px;width:2px;height:2px;background:#333"></div><div class="a" style="left:594px;top:234px;width:5px;height:5px;background:repeating-linear-gradient(#777 0 1px,transparent 1px 2px)"></div>
<div class="a" style="left:430px;top:246px;width:170px;height:19px;background:#f2f2f2"></div>
<div class="a" style="left:430px;top:246px;width:170px;height:14px;background:linear-gradient(#f8f8f8,#d6d6d6);border-bottom:1px solid #c0c0c0"></div>
<div class="tab" style="left:433px;top:251px;width:50px;height:9px;background:#f4f4f4"></div>
<div class="t" style="left:437px;top:253px;color:#444;font-size:6.8px;letter-spacing:-0.1px">Компоненты</div>
<svg class="a" style="left:475px;top:253px" width="6" height="6" viewBox="0 0 6 6"><path d="M1 1 L5 5 M5 1 L1 5" stroke="#666" stroke-width=".9"/></svg>
<div class="tabg" style="left:484px;top:252px;width:82px;height:8px"></div>
<div class="t" style="left:488px;top:253px;color:#222;font-size:6.8px;letter-spacing:-0.13px">Инспектор компонентов</div>
<svg class="a" style="left:580px;top:253px" width="20" height="8" viewBox="0 0 20 8"><path d="M4 7.5 Q6 7.5 8 4 Q10 1 13 1 H20 V8 H4z" fill="#f2f2f2"/><path d="M4 7.5 Q6 7.5 8 4 Q10 1 13 1 H20" fill="none" stroke="#c8c8c8" stroke-width=".8"/></svg><div class="a" style="left:586px;top:249px;width:5px;height:4px;border:1px solid #777;border-top-width:2px;background:#f0f0f0"></div><svg class="a" style="left:593px;top:247px" width="7" height="7" viewBox="0 0 7 7"><path d="M1 1 L5.5 5.5 M5.5 1 L1 5.5" stroke="#999" stroke-width="1"/></svg><div class="a" style="left:591px;top:257px;width:2px;height:2px;background:#333"></div><div class="a" style="left:594px;top:254px;width:5px;height:5px;background:repeating-linear-gradient(#777 0 1px,transparent 1px 2px)"></div>
<div class="a" style="left:430px;top:267px;width:170px;height:18px;background:#f2f2f2"></div>
<div class="a" style="left:430px;top:267px;width:170px;height:13px;background:linear-gradient(#f8f8f8,#d6d6d6);border-bottom:1px solid #c0c0c0"></div>
<div class="tab" style="left:433px;top:272px;width:63px;height:8px;background:#f4f4f4"></div>
<div class="t" style="left:437px;top:274px;color:#222;font-size:6.8px;letter-spacing:-0.05px">Действия - кадр</div>
<svg class="a" style="left:488px;top:274px" width="6" height="6" viewBox="0 0 6 6"><path d="M1 1 L5 5 M5 1 L1 5" stroke="#666" stroke-width=".9"/></svg>
<svg class="a" style="left:580px;top:273px" width="20" height="8" viewBox="0 0 20 8"><path d="M4 7.5 Q6 7.5 8 4 Q10 1 13 1 H20 V8 H4z" fill="#f2f2f2"/><path d="M4 7.5 Q6 7.5 8 4 Q10 1 13 1 H20" fill="none" stroke="#c8c8c8" stroke-width=".8"/></svg><div class="a" style="left:586px;top:270px;width:5px;height:4px;border:1px solid #777;border-top-width:2px;background:#f0f0f0"></div><svg class="a" style="left:593px;top:268px" width="7" height="7" viewBox="0 0 7 7"><path d="M1 1 L5.5 5.5 M5.5 1 L1 5.5" stroke="#999" stroke-width="1"/></svg><div class="a" style="left:591px;top:277px;width:2px;height:2px;background:#333"></div><div class="a" style="left:594px;top:274px;width:5px;height:5px;background:repeating-linear-gradient(#777 0 1px,transparent 1px 2px)"></div>

<!-- BOTTOM STRIP -->
<div class="a" style="left:0;top:450px;width:600px;height:2px;background:linear-gradient(#2a78d8,#4a98f0)"></div>
<div class="a" style="left:0;top:452px;width:600px;height:13px;background:linear-gradient(#c8c0c0 0,#ffffff 8%,#ffffff 35%,#e0e0e4 50%,#a4a4ac 100%)"></div>
<svg class="a" style="left:0;top:451px" width="52" height="14" viewBox="0 451 52 14">
 <g fill="#5a554e" stroke="#8a857e" stroke-width="1">
  <circle cx="8" cy="459" r="6"/><circle cx="25" cy="459" r="6"/><circle cx="41" cy="459" r="6"/>
 </g>
 <path d="M6 456 L11 459 L6 462z" fill="#fff"/>
 <rect x="22.5" y="456" width="2" height="6" fill="#fff"/><rect x="25.5" y="456" width="2" height="6" fill="#fff"/>
 <rect x="38.5" y="456.5" width="5" height="5" fill="#fff"/>
</svg>
</body></html>
